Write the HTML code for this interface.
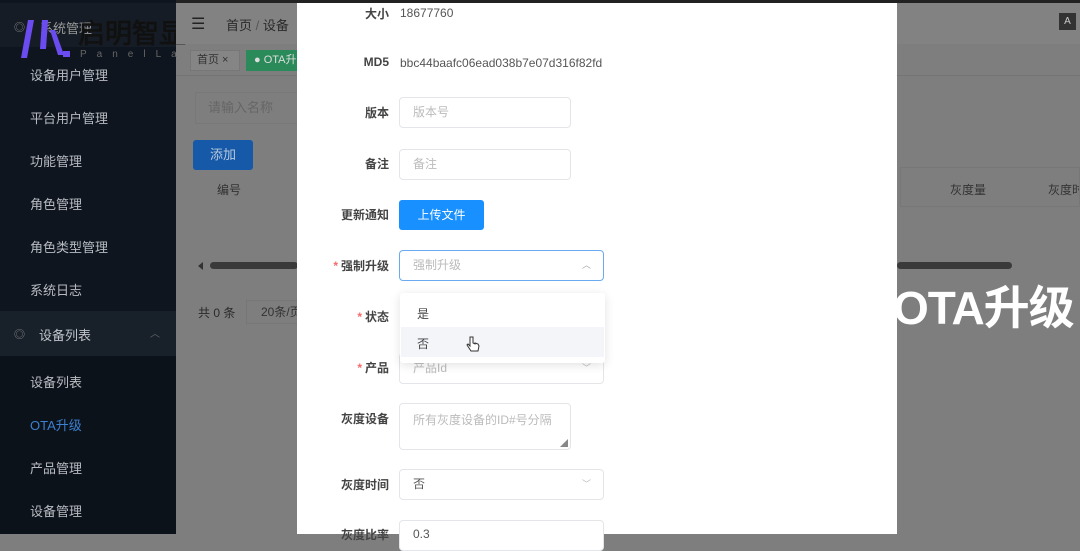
<!DOCTYPE html>
<html><head><meta charset="utf-8">
<style>
*{margin:0;padding:0;box-sizing:border-box}
body{width:1080px;height:534px;overflow:hidden;position:relative;background:#7e7e7e;font-family:"Liberation Sans","Noto Sans CJK SC",sans-serif;font-size:13px;white-space:nowrap}
.a{position:absolute}
.side{left:0;top:0;width:176px;height:534px;background:#0e151e}
.mi{position:absolute;left:30px;color:#b8bcc2;font-size:13px}
.lbl{position:absolute;right:calc(1080px - 389px);color:#444;font-weight:bold;font-size:12px;text-align:right;white-space:nowrap}
.inp{position:absolute;left:399px;border:1px solid #e3e5e8;border-radius:4px;background:#fff;color:#bbb;font-size:12px;padding-left:13px}
.star{color:#f56c6c;margin-right:3px}
</style></head><body>
<div class="a" style="left:0;top:0;width:1080px;height:3px;background:#222"></div>
<div class="a side"></div>
<div class="a" style="left:0;top:3px;width:176px;height:44px;background:#151c25"></div>
<div class="a" style="left:0;top:311px;width:176px;height:45px;background:#18202a"></div>
<div class="a" style="left:0;top:356px;width:176px;height:178px;background:#0c121a"></div>
<div class="a" style="left:14px;top:19px;color:#888;font-size:11px">◎</div>
<div class="a" style="left:40px;top:18px;color:#999;font-size:13px">系统管理</div>
<svg class="a" style="left:0;top:0" width="80" height="70" viewBox="0 0 80 70"><polygon points="28,20 34,20 27,58 21,58" fill="#6a4cf0"/><polygon points="42,20 48,20 46,49 40,49" fill="#6a4cf0"/><polygon points="50,30 55,30 64,55 58,55" fill="#6a4cf0"/><rect x="63" y="51" width="7" height="6" fill="#6a4cf0"/></svg>
<div class="a" style="left:78px;top:17px;color:#111;font-size:27px;line-height:34px;-webkit-text-stroke:0.8px #111">启明智显</div>
<div class="a" style="left:80px;top:49px;color:#666;font-size:10px;letter-spacing:10px">PanelLa</div>
<div class="mi" style="top:65px">设备用户管理</div>
<div class="mi" style="top:108px">平台用户管理</div>
<div class="mi" style="top:151px">功能管理</div>
<div class="mi" style="top:194px">角色管理</div>
<div class="mi" style="top:237px">角色类型管理</div>
<div class="mi" style="top:280px">系统日志</div>
<div class="a" style="left:14px;top:326px;color:#888;font-size:11px">◎</div>
<div class="a" style="left:39px;top:325px;color:#c0c4ca;font-size:13px">设备列表</div>
<div class="a" style="left:150px;top:325px;color:#666;font-size:10px">︿</div>
<div class="mi" style="top:372px">设备列表</div>
<div class="mi" style="top:415px;color:#3d7fd0">OTA升级</div>
<div class="mi" style="top:458px">产品管理</div>
<div class="mi" style="top:501px">设备管理</div>
<!-- background page -->
<div class="a" style="left:176px;top:3px;width:904px;height:41px;background:#828282"></div>
<div class="a" style="left:191px;top:14px;color:#222;font-size:16px">☰</div>
<div class="a" style="left:226px;top:15px;color:#2a2a2a;font-size:13px">首页 <span style="color:#555">/</span> 设备</div>
<div class="a" style="left:1059px;top:13px;width:17px;height:17px;background:#333;color:#ccc;font-size:10px;text-align:center;line-height:17px">A</div>
<div class="a" style="left:176px;top:75px;width:904px;height:1px;background:#747474"></div>
<div class="a" style="left:190px;top:50px;width:50px;height:21px;background:#858585;border:1px solid #777;color:#333;font-size:11px;line-height:19px;padding-left:6px">首页 ×</div>
<div class="a" style="left:246px;top:50px;width:52px;height:21px;background:#2a8a5a;color:#ddd;font-size:11px;line-height:21px;padding-left:8px;overflow:hidden">● OTA升</div>
<div class="a" style="left:195px;top:92px;width:110px;height:32px;border:1px solid #787878;color:#666;font-size:13px;line-height:30px;padding-left:12px">请输入名称</div>
<div class="a" style="left:193px;top:140px;width:60px;height:30px;background:#1559a8;border-radius:3px;color:#b9c8dc;font-size:13px;line-height:30px;text-align:center">添加</div>
<div class="a" style="left:217px;top:181px;color:#333;font-size:12px">编号</div>
<div class="a" style="left:950px;top:181px;color:#333;font-size:12px">灰度量</div>
<div class="a" style="left:1048px;top:181px;color:#333;font-size:12px">灰度时</div>
<div class="a" style="left:900px;top:167px;width:180px;height:40px;border:1px solid #777"></div>
<div class="a" style="left:198px;top:262px;width:5px;height:8px;background:#333;clip-path:polygon(100% 0,0 50%,100% 100%)"></div>
<div class="a" style="left:210px;top:262px;width:88px;height:7px;background:#3a3a3a;border-radius:4px"></div>
<div class="a" style="left:897px;top:262px;width:115px;height:7px;background:#3a3a3a;border-radius:4px"></div>
<div class="a" style="left:198px;top:304px;color:#2a2a2a;font-size:12px">共 0 条</div>
<div class="a" style="left:246px;top:300px;width:52px;height:24px;border:1px solid #777;color:#333;font-size:12px;line-height:22px;padding-left:14px;overflow:hidden">20条/页</div>
<div class="a" style="left:893px;top:281px;color:#fff;font-size:46px;font-weight:bold;letter-spacing:-1px;line-height:54px">OTA升级</div>
<!-- modal -->
<div class="a" style="left:297px;top:3px;width:600px;height:531px;background:#fff"></div>
<div class="lbl" style="top:5px">大小</div>
<div class="a" style="left:400px;top:6px;color:#555;font-size:12px">18677760</div>
<div class="lbl" style="top:55px">MD5</div>
<div class="a" style="left:400px;top:56px;color:#555;font-size:12px">bbc44baafc06ead038b7e07d316f82fd</div>
<div class="lbl" style="top:104px">版本</div>
<div class="inp" style="top:97px;width:172px;height:31px;line-height:29px">版本号</div>
<div class="lbl" style="top:155px">备注</div>
<div class="inp" style="top:149px;width:172px;height:31px;line-height:29px">备注</div>
<div class="lbl" style="top:206px">更新通知</div>
<div class="a" style="left:399px;top:200px;width:85px;height:30px;background:#1890ff;border-radius:3px;color:#fff;font-size:12px;line-height:30px;text-align:center">上传文件</div>
<div class="lbl" style="top:257px"><span class="star">*</span>强制升级</div>
<div class="inp" style="top:250px;width:205px;height:31px;line-height:29px;border-color:#6aaaf0">强制升级<span style="position:absolute;right:12px;color:#aaa;font-size:9px">︿</span></div>
<div class="lbl" style="top:308px"><span class="star">*</span>状态</div>
<div class="lbl" style="top:359px"><span class="star">*</span>产品</div>
<div class="inp" style="top:353px;width:205px;height:31px;line-height:29px">产品Id<span style="position:absolute;right:12px;color:#bbb;font-size:9px">﹀</span></div>
<div class="a" style="left:400px;top:293px;width:205px;height:70px;background:#fff;box-shadow:0 2px 10px rgba(0,0,0,.12);border-radius:3px"></div>
<div class="a" style="left:401px;top:327px;width:203px;height:30px;background:#f4f5f8"></div>
<div class="a" style="left:417px;top:305px;color:#444;font-size:12px">是</div>
<div class="a" style="left:417px;top:335px;color:#444;font-size:12px">否</div>
<svg class="a" style="left:466px;top:336px" width="14" height="18" viewBox="0 0 14 18"><path d="M4 1v9l-2-2-1 1 4 6h7l1-5-1-2-3-1V8L7 7V1z" fill="#fff" stroke="#333" stroke-width="1"/></svg>
<div class="lbl" style="top:410px">灰度设备</div>
<div class="inp" style="top:403px;width:172px;height:47px;padding-top:7px">所有灰度设备的ID#号分隔<span style="position:absolute;right:2px;bottom:0;color:#888;font-size:8px">◢</span></div>
<div class="lbl" style="top:476px">灰度时间</div>
<div class="inp" style="top:469px;width:205px;height:31px;line-height:29px;color:#555">否<span style="position:absolute;right:12px;color:#bbb;font-size:9px">﹀</span></div>
<div class="lbl" style="top:526px">灰度比率</div>
<div class="inp" style="top:520px;width:205px;height:31px;line-height:26px;color:#555">0.3</div>
</body></html>
